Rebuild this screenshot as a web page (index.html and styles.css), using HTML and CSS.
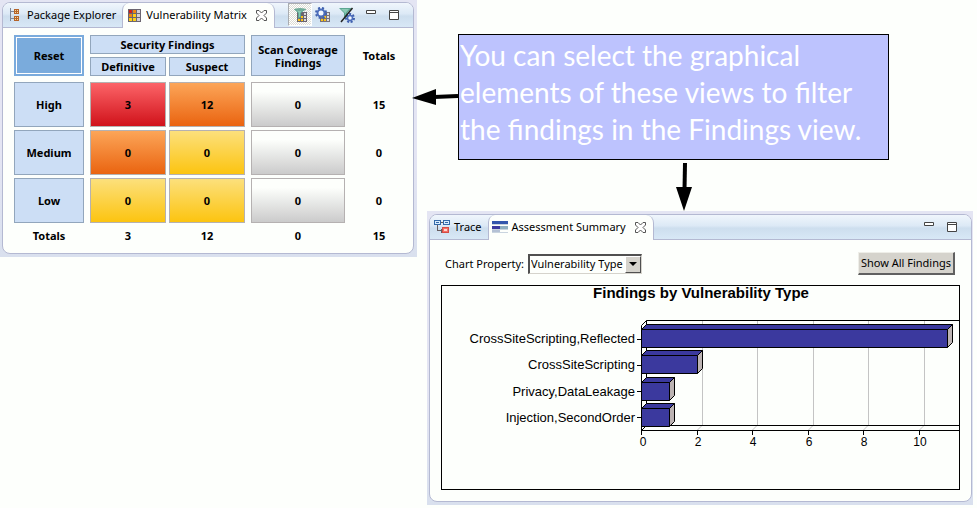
FILE: index.html
```html
<!DOCTYPE html>
<html lang="en">
<head>
<meta charset="utf-8">
<title>Findings views</title>
<link rel="stylesheet" href="styles.css">
</head>
<body>
<main class="board">
  <section class="view view-matrix" aria-label="Vulnerability Matrix">
    <div class="pane">
      <header class="tabbar">
        <button class="tab" type="button">
          <svg class="icon" viewBox="0 0 16 16" aria-hidden="true" shape-rendering="crispEdges">
            <path d="M3.500 1v13M4 4.500h3M4 11.500h3" fill="none" stroke="#7d8799"/>
            <path d="M7 2h5v5H7zM7 9h5v5H7z" fill="#f7d9a0"/>
            <path d="M7.500 2.500h4v4h-4zM9.500 2v5M7 4.500h5M7.500 9.500h4v4h-4zM9.500 9v5M7 11.500h5" fill="none" stroke="#b5642a"/>
          </svg>
          <span>Package Explorer</span>
        </button>
        <button class="tab active" type="button">
          <svg class="icon" viewBox="0 0 16 16" aria-hidden="true" shape-rendering="crispEdges">
            <path d="M2 2h13v13H2z" fill="#6b6570"/>
            <path d="M3 3h3v3H3z" fill="#cc1f1a"/>
            <path d="M7 3h3v3H7zM3 7h3v3H3z" fill="#ee8312"/>
            <path d="M7 7h3v3H7zM3 11h3v3H3zM7 11h3v3H7z" fill="#fdd017"/>
            <path d="M11 3h3v3h-3zM11 7h3v3h-3zM11 11h3v3h-3z" fill="#d4d0d4"/>
          </svg>
          <span>Vulnerability Matrix</span>
          <svg class="close" viewBox="0 0 11 11" aria-hidden="true"><path d="M.5.5h2.500l2.500 2.500L8 .5h2.500V3L8 5.500 10.500 8v2.500H8L5.500 8 3 10.500H.5V8L3 5.500.5 3z" fill="#fff" stroke="#555"/></svg>
        </button>
        <div class="tools">
          <button class="tool on" type="button" aria-label="Filter matrix" aria-pressed="true">
            <svg class="icon" viewBox="0 0 16 16" aria-hidden="true">
              <path d="M5 5h10v10H5z" fill="#6b6570"/>
              <path d="M6 12h2v2H6zM9 12h2v2H9zM9 9h2v2H9z" fill="#fdc417"/>
              <path d="M12 6h2v2h-2zM12 9h2v2h-2zM12 12h2v2h-2z" fill="#ddd"/>
              <path d="M2 2l4 4v6l3-2V6l5-4z" fill="#5ca791"/><path d="M4 2.500h7L8 6v4H7V6z" fill="#8bcab5"/><ellipse cx="8" cy="2.500" rx="6" ry="1.500" fill="#70ab98"/>
            </svg>
          </button>
          <button class="tool" type="button" aria-label="Matrix settings">
            <svg class="icon" viewBox="0 0 16 16" aria-hidden="true">
              <path d="M5 5h10v10H5z" fill="#77717a"/>
              <path d="M6 12h2v2H6zM9 12h2v2H9zM9 9h2v2H9z" fill="#fdc417"/><path d="M12 6h2v2h-2zM12 9h2v2h-2zM12 12h2v2h-2z" fill="#ddd"/>
              <circle cx="6" cy="6" r="5" fill="none" stroke="#3e5fae" stroke-width="2" stroke-dasharray="2 2"/>
              <circle cx="6" cy="6" r="3.500" fill="#f2f7ff" stroke="#4b6cba" stroke-width="2"/>
            </svg>
          </button>
          <button class="tool" type="button" aria-label="Filter settings">
            <svg class="icon" viewBox="0 0 16 16" aria-hidden="true">
              <path d="M0 1l5 5v6l3-2V6l5-5z" fill="#5ca791"/><path d="M2 2h8L6.500 6v4H6V6z" fill="#8bcab5"/>
              <circle cx="11" cy="11" r="4" fill="none" stroke="#3e5fae" stroke-width="2" stroke-dasharray="2 1.500"/>
              <circle cx="11" cy="11" r="2.500" fill="#f2f7ff" stroke="#4b6cba" stroke-width="1.500"/>
              <path d="M13.500 1L2 15" stroke="#222" stroke-width="1.500"/>
            </svg>
          </button>
          <button class="win" type="button" aria-label="Minimize"><svg viewBox="0 0 10 12" aria-hidden="true"><path d="M.5 1.500h9v3h-9z" fill="#fff" stroke="#444"/></svg></button>
          <button class="win" type="button" aria-label="Maximize"><svg viewBox="0 0 10 12" aria-hidden="true"><path d="M.5 1.500h9v9h-9zM0 3.500h10" fill="#fff" stroke="#444"/></svg></button>
        </div>
      </header>
      <div class="matrix-wrap">
        <table class="matrix">
          <colgroup><col class="c-label"><col class="c-def"><col class="c-sus"><col class="c-scan"><col></colgroup>
          <thead>
            <tr>
              <th rowspan="2" class="end"><button class="cell reset" type="button">Reset</button></th>
              <th colspan="2" class="end"><button class="cell head" type="button">Security Findings</button></th>
              <th rowspan="2"><button class="cell tall" type="button">Scan Coverage Findings</button></th>
              <th rowspan="2" scope="col">Totals</th>
            </tr>
            <tr class="last">
              <th class="mid"><button class="cell head" type="button">Definitive</button></th>
              <th class="end"><button class="cell head" type="button">Suspect</button></th>
            </tr>
          </thead>
          <tbody>
            <tr><th class="end"><button class="cell label" type="button">High</button></th><td class="mid"><button class="cell red" type="button">3</button></td><td class="end"><button class="cell orange" type="button">12</button></td><td><button class="cell gray" type="button">0</button></td><td>15</td></tr>
            <tr><th class="end"><button class="cell label" type="button">Medium</button></th><td class="mid"><button class="cell orange" type="button">0</button></td><td class="end"><button class="cell yellow" type="button">0</button></td><td><button class="cell gray" type="button">0</button></td><td>0</td></tr>
            <tr><th class="end"><button class="cell label" type="button">Low</button></th><td class="mid"><button class="cell yellow" type="button">0</button></td><td class="end"><button class="cell yellow" type="button">0</button></td><td><button class="cell gray" type="button">0</button></td><td>0</td></tr>
          </tbody>
          <tfoot>
            <tr><th class="end" scope="row">Totals</th><td class="mid">3</td><td class="end">12</td><td>0</td><td>15</td></tr>
          </tfoot>
        </table>
      </div>
    </div>
  </section>

  <div class="side">
    <div class="callout">
      <p>You can select the graphical elements of these views to filter the findings in the Findings view.</p>
      <svg class="arrow-left" viewBox="0 0 46 18" aria-hidden="true"><path d="M46 8L22 9" stroke="#000" stroke-width="4"/><path d="M0 10L24 1v16z"/></svg>
    </div>
    <svg class="arrow-down" viewBox="0 0 18 51" aria-hidden="true"><path d="M10 3L9.500 30" stroke="#000" stroke-width="4"/><path d="M9 51L1 27h16z"/></svg>

    <section class="view view-summary" aria-label="Assessment Summary">
      <div class="pane">
        <header class="tabbar">
          <button class="tab" type="button">
            <svg class="icon" viewBox="0 0 16 16" aria-hidden="true" shape-rendering="crispEdges">
              <path d="M6 3.500h3M3.500 6v5.500h4M7 9.500v4" fill="none" stroke="#665d60"/>
              <path d="M.5 1.500h6v4h-6zM9.500 1.500h6v4h-6z" fill="#d8ecff" stroke="#3369a8"/>
              <path d="M2 3h3v1H2zM11 3h3v1h-3z" fill="#3369a8"/>
              <path d="M8.500 8.500h6v5h-6z" fill="#f47065" stroke="#d54c45"/><path d="M10 10h3v2h-3z" fill="#ffd5ce"/>
            </svg>
            <span>Trace</span>
          </button>
          <button class="tab active" type="button">
            <svg class="icon" viewBox="0 0 16 16" aria-hidden="true" shape-rendering="crispEdges">
              <path d="M0 2h16v3H0z" fill="#3356ad"/><path d="M0 7h8v3H0z" fill="#3b399e"/><path d="M8 7h8v3H8z" fill="#8faec0"/><path d="M0 11h8v2H0z" fill="#b4c1d5"/>
              <path d="M0 5.500h16M0 10.500h16M0 13.500h16" stroke="#c9d4df"/>
            </svg>
            <span>Assessment Summary</span>
            <svg class="close" viewBox="0 0 11 11" aria-hidden="true"><path d="M.5.5h2.500l2.500 2.500L8 .5h2.500V3L8 5.500 10.500 8v2.500H8L5.500 8 3 10.500H.5V8L3 5.500.5 3z" fill="#fff" stroke="#555"/></svg>
          </button>
          <div class="tools">
            <button class="win" type="button" aria-label="Minimize"><svg viewBox="0 0 10 12" aria-hidden="true"><path d="M.5 1.500h9v3h-9z" fill="#fff" stroke="#444"/></svg></button>
            <button class="win" type="button" aria-label="Maximize"><svg viewBox="0 0 10 12" aria-hidden="true"><path d="M.5 1.500h9v9h-9zM0 3.500h10" fill="#fff" stroke="#444"/></svg></button>
          </div>
        </header>
        <div class="summary">
          <div class="controls">
            <label for="chart-property">Chart Property:</label>
            <span class="picker">
              <select id="chart-property"><option>Vulnerability Type</option></select>
              <span class="drop" aria-hidden="true"></span>
            </span>
            <button class="show" type="button">Show All Findings</button>
          </div>
          <svg class="chart" viewBox="0 0 519 205" role="img" aria-label="Findings by Vulnerability Type">
            <rect class="line" x="0.500" y="0.500" width="518" height="204"/>
            <text class="title" x="260" y="13">Findings by Vulnerability Type</text>
            <g class="grid">
              <path d="M261.500 35v105l-5 5M316.500 35v105l-5 5M372.500 35v105l-5 5M427.500 35v105l-5 5M483.500 35v105l-5 5"/>
            </g>
            <path class="line" d="M518 35.500H205.500V140.500H518M518 145.500H200.500V40.500l5-5M200.500 145.500l5-5"/>
            <path class="line" d="M200.500 145v5M256.500 145v5M311.500 145v5M367.500 145v5M422.500 145v5M478.500 145v5M196 54.500h4M196 80.500h4M196 106.500h4M196 132.500h4"/>
            <g class="bars">
              <path class="end-face" d="M506.500 44.500l5-5v18l-5 5z"/><path d="M200.500 44.500l5-5h306l-5 5z"/><path d="M200.500 44.500h306v18h-306z"/>
              <path class="end-face" d="M256.500 70.500l5-5v18l-5 5z"/><path d="M200.500 70.500l5-5h56l-5 5z"/><path d="M200.500 70.500h56v18h-56z"/>
              <path class="end-face" d="M228.500 97.500l5-5v18l-5 5z"/><path d="M200.500 97.500l5-5h28l-5 5z"/><path d="M200.500 97.500h28v18h-28z"/>
              <path class="end-face" d="M228.500 123.500l5-5v18l-5 5z"/><path d="M200.500 123.500l5-5h28l-5 5z"/><path d="M200.500 123.500h28v18h-28z"/>
            </g>
            <g class="names">
              <text x="194" y="58">CrossSiteScripting,Reflected</text>
              <text x="194" y="84">CrossSiteScripting</text>
              <text x="194" y="111">Privacy,DataLeakage</text>
              <text x="194" y="137">Injection,SecondOrder</text>
            </g>
            <g class="ticks">
              <text x="202" y="161">0</text><text x="257" y="161">2</text><text x="312" y="161">4</text><text x="368" y="161">6</text><text x="423" y="161">8</text><text x="479" y="161">10</text>
            </g>
          </svg>
        </div>
      </div>
    </section>
  </div>
</main>
</body>
</html>
```
FILE: styles.css
```css
* { box-sizing: border-box; }

body {
  margin: 0;
  background: #fdfffc;
  color: #000;
  font: 11px/16px "Noto Sans", "Open Sans", sans-serif;
}

button, select { font: inherit; color: inherit; margin: 0; border-radius: 0; }

.board {
  display: grid;
  grid-template-columns: 417fr 550fr;
  gap: 10px;
  align-items: start;
}

.view { background: linear-gradient(#e4e5f3 60%, #d9e0ee); }
.view-matrix { padding: 2px 3px 3px 2px; }
.view-summary { padding: 3px 1px 3px 2px; }

.pane {
  background: #fdfffc;
  border: 1px solid #b4b9d2;
  border-radius: 8px;
  overflow: hidden;
}

/* Tab bar */
.tabbar {
  display: flex;
  height: 25px;
  background: linear-gradient(#f0f6fc, #dce9f6 45%, #cddeee 55%, #d8e8f6);
  border-bottom: 1px solid #b4b9d2;
}

.tab {
  display: flex;
  align-items: center;
  gap: 4px;
  height: 24px;
  padding: 0 6px 0 4px;
  border: 0;
  background: none;
  white-space: nowrap;
}

.tab.active {
  height: 25px;
  padding: 0 7px 1px 3px;
  background: #fdfffc;
  border: solid #b4b9d2;
  border-width: 0 1px;
  border-radius: 7px 8px 0 0;
}

.icon { width: 16px; height: 16px; flex: none; }
.close { width: 11px; height: 11px; margin-left: 5px; }

.tools { display: flex; margin-left: auto; padding-right: 14px; }
.tool { width: 24px; height: 23px; padding: 3px; border: 0; background: none; }
.tool svg { display: block; }
.tool.on {
  border: 1px solid #a9acb0;
  border-right-color: #fff;
  border-bottom-color: #fff;
  background: repeating-conic-gradient(#fff 0 25%, #dcdcd4 0 50%) 0 0 / 2px 2px;
}
.win {
  display: flex;
  align-items: flex-start;
  width: 10px;
  height: 24px;
  margin-left: 13px;
  padding: 6px 0 0;
  border: 0;
  background: none;
}
.win:first-child { margin-left: 0; }
.tool + .win { margin-left: 6px; }
.win svg { width: 10px; height: 12px; }

/* Vulnerability matrix */
.matrix-wrap { padding: 7px 0 9px 11px; }

.matrix {
  width: 100%;
  table-layout: fixed;
  border-collapse: collapse;
  font: bold 11px/13px "Noto Sans", sans-serif;
  text-align: center;
}

.c-label { width: 76px; }
.c-def { width: 79px; }
.c-sus { width: 82px; }
.c-scan { width: 94px; }

.matrix th, .matrix td { padding: 0 0 3px; }
.matrix .mid { padding-right: 3px; }
.matrix .end { padding-right: 6px; }
.matrix .last th, .matrix th[rowspan] { padding-bottom: 6px; }
.matrix tfoot th, .matrix tfoot td { height: 18px; padding-bottom: 0; }

.cell {
  display: block;
  width: 100%;
  height: 45px;
  padding: 0 2px;
  border: 1px solid #b5b1b1;
  background: #ccdef5;
}
.head, .tall, .reset, .label { border-color: #92a6bc; }
.head { height: 19px; }
.tall { height: 41px; }
.reset { height: 41px; background: #7aabdc; border: 1px solid #7aabdc; outline: 1px solid #fff; outline-offset: -3px; }
.red { background: linear-gradient(#fc6468, #d0121a); }
.orange { background: linear-gradient(#fca558, #ea6410); }
.yellow { background: linear-gradient(#fce07c, #fcc410); }
.gray { background: linear-gradient(#fdfffc 20%, #cbcbcb); }

/* Callout and arrows */
.side { padding: 34px 4px 0 0; }

.callout {
  position: relative;
  max-width: 431px;
  min-height: 126px;
  margin-left: 31px;
  padding: 2px 1px;
  border: 1px solid #000;
  background: #bdc3fe;
}
.callout p { margin: 0; color: #fff; font: 28px/37px Lato, "Open Sans", sans-serif; }

.arrow-left { position: absolute; left: -47px; top: 53px; width: 46px; height: 18px; }
.arrow-down { display: block; width: 18px; height: 51px; margin-left: 248px; }

/* Assessment summary */
.summary { padding: 12px 11px 11px; }

.controls { display: flex; align-items: center; height: 23px; margin: 0 5px 10px 4px; }

.picker { position: relative; margin-left: 4px; }
.picker select {
  display: block;
  width: 114px;
  height: 20px;
  padding: 0 0 0 1px;
  appearance: none;
  border: 2px solid #505050;
  border-right: 1px solid #d5d3cc;
  border-bottom: 1px solid #d5d3cc;
  background: #fdfffc;
}
.drop {
  position: absolute;
  top: 2px;
  right: 1px;
  display: grid;
  place-items: center;
  width: 16px;
  height: 17px;
  border: 1px solid #fff;
  border-right-color: #505050;
  border-bottom-color: #505050;
  background: #d5d3cc;
  pointer-events: none;
}
.drop::after { content: ""; border: 4px solid transparent; border-top-color: #000; border-bottom: 0; }

.show {
  height: 23px;
  margin-left: auto;
  padding: 0 2px;
  border: 1px solid #eeeee8;
  border-right: 2px solid #606060;
  border-bottom: 2px solid #606060;
  background: #d5d3cc;
}

.chart { display: block; width: 100%; height: auto; }
.chart text { font: 12px "Liberation Sans", sans-serif; }
.chart .title { font-size: 15px; font-weight: bold; text-anchor: middle; }
.chart .names text { font-size: 13px; text-anchor: end; }
.ticks { text-anchor: middle; }
.line { fill: none; stroke: #000; }
.grid { fill: none; stroke: #c4c4c4; }
.bars { fill: #3b399e; stroke: #000; }
.end-face { fill: #bcb3b3; }
```
